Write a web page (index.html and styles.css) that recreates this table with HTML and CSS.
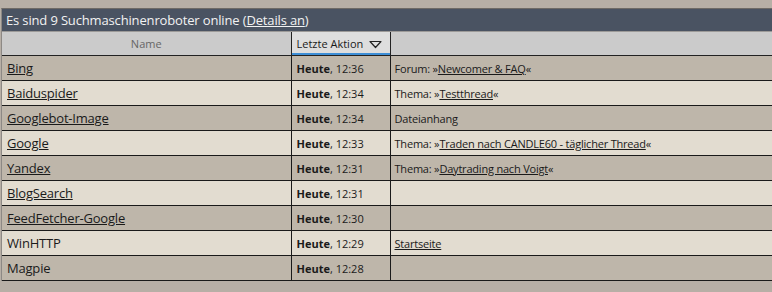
FILE: index.html
```html
<!DOCTYPE html>
<html lang="de">
<head>
<meta charset="utf-8">
<title>Suchmaschinenroboter</title>
<link rel="stylesheet" href="styles.css">
</head>
<body>
<div class="box">
  <div class="title">Es sind 9 Suchmaschinenroboter online (<a href="#">Details an</a>)</div>
  <table class="list">
    <colgroup><col class="c-name"><col class="c-time"><col class="c-loc"></colgroup>
    <thead>
      <tr>
        <th class="h-name">Name</th>
        <th class="h-time">Letzte Aktion <svg class="sort" width="13" height="9" viewBox="0 0 13 9"><path d="M1 1.5 H12 L6.5 7.5 Z" fill="none" stroke="#222" stroke-width="1.2" stroke-linejoin="round"/></svg></th>
        <th class="h-loc"></th>
      </tr>
    </thead>
    <tbody>
      <tr class="dark"><td class="name"><a href="#">Bing</a></td><td class="time"><b>Heute</b>, 12:36</td><td class="loc">Forum: »<a href="#">Newcomer &amp; FAQ</a>«</td></tr>
      <tr class="light"><td class="name"><a href="#">Baiduspider</a></td><td class="time"><b>Heute</b>, 12:34</td><td class="loc">Thema: »<a href="#">Testthread</a>«</td></tr>
      <tr class="dark"><td class="name"><a href="#">Googlebot-Image</a></td><td class="time"><b>Heute</b>, 12:34</td><td class="loc">Dateianhang</td></tr>
      <tr class="light"><td class="name"><a href="#">Google</a></td><td class="time"><b>Heute</b>, 12:33</td><td class="loc">Thema: »<a href="#">Traden nach CANDLE60 - täglicher Thread</a>«</td></tr>
      <tr class="dark"><td class="name"><a href="#">Yandex</a></td><td class="time"><b>Heute</b>, 12:31</td><td class="loc">Thema: »<a href="#">Daytrading nach Voigt</a>«</td></tr>
      <tr class="light"><td class="name"><a href="#">BlogSearch</a></td><td class="time"><b>Heute</b>, 12:31</td><td class="loc"></td></tr>
      <tr class="dark"><td class="name"><a href="#">FeedFetcher-Google</a></td><td class="time"><b>Heute</b>, 12:30</td><td class="loc"></td></tr>
      <tr class="light"><td class="name">WinHTTP</td><td class="time"><b>Heute</b>, 12:29</td><td class="loc"><a href="#">Startseite</a></td></tr>
      <tr class="dark"><td class="name">Magpie</td><td class="time"><b>Heute</b>, 12:28</td><td class="loc"></td></tr>
    </tbody>
  </table>
</div>
</body>
</html>
```
FILE: styles.css
```css
html, body {
  margin: 0;
  padding: 0;
}
body {
  background: #b7afa6;
  font-family: "Open Sans", "Liberation Sans", sans-serif;
  color: #1a1a1a;
  height: 292px;
  overflow: hidden;
}
a {
  color: #1a1a1a;
  text-decoration: underline;
}
.box {
  margin-top: 8px;
  margin-left: 1px;
  border-top: 1px solid #6e6a66;
  border-left: 1px solid #8d8985;
}
.title {
  background: #4a5362;
  color: #f2f2f2;
  font-size: 13px;
  letter-spacing: -0.15px;
  height: 22px;
  line-height: 22px;
  padding-left: 4px;
  border-bottom: 1px solid #9c9a98;
}
.title a {
  color: #f2f2f2;
}
.list {
  border-collapse: collapse;
  width: 771px;
  table-layout: fixed;
}
.c-name { width: 289px; }
.c-time { width: 99px; }
.list th {
  background: #cbcbcb;
  height: 23px;
  padding: 0;
  font-weight: normal;
  font-size: 11px;
  border-bottom: 1px solid #222;
}
.h-name {
  color: #666;
  text-align: center;
}
.h-time {
  background: #dedede !important;
  text-align: left;
  padding-left: 5px !important;
  border-left: 1px solid #222;
  border-right: 1px solid #222;
  box-shadow: inset 0 -2px 0 #3d8ed6;
  color: #1a1a1a;
  white-space: nowrap;
}
.sort {
  vertical-align: -1px;
  margin-left: 3px;
}
.list td {
  height: 24px;
  padding: 0 0 0 4px;
  border-bottom: 1px solid #1a1a1a;
  font-size: 11px;
  white-space: nowrap;
  overflow: hidden;
}
.list td.name {
  font-size: 13px;
  letter-spacing: -0.2px;
  padding-left: 5px;
}
.list td.time {
  border-left: 1px solid #1a1a1a;
  border-right: 1px solid #1a1a1a;
  padding-left: 5px;
}
.list td.loc {
  padding-left: 4px;
  letter-spacing: -0.2px;
}
.dark td { background: #beb6aa; }
.light td { background: #e2dcd0; }
```
